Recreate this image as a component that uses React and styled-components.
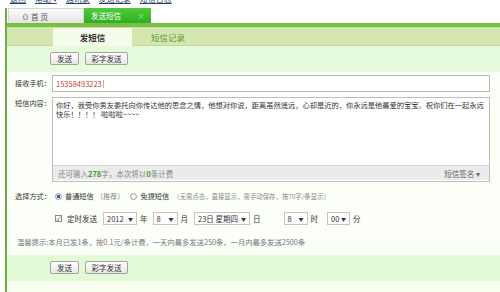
import React from "react";
import styled, { createGlobalStyle } from "styled-components";

const GlobalStyle = createGlobalStyle`
  html, body {
    margin: 0;
    padding: 0;
    background: #fff;
  }
  body {
    width: 500px;
    height: 292px;
    overflow: hidden;
    font-family: "Noto Sans CJK SC", "Noto Sans", sans-serif;
    font-size: 7.5px;
    color: #333;
  }
`;

const TopLinks = styled.div`
  height: 5px;
  overflow: hidden;
  display: flex;
  align-items: flex-end;
  gap: 9px;
  padding-left: 10px;
`;

const TopLink = styled.a`
  font-size: 8px;
  line-height: 12px;
  color: #2d3f6c;
  text-decoration: underline;
  white-space: nowrap;
`;

const Frame = styled.div`
  margin: 3px 0 0 5px;
  border-left: 2px solid #6fae47;
  height: 284px;
  display: flex;
  flex-direction: column;
  background: #f8fff1;
`;

const TabBar = styled.div`
  display: flex;
  height: 15px;
  background: #fff;
`;

const HomeTab = styled.div`
  width: 76px;
  margin-left: 1px;
  box-sizing: border-box;
  background: linear-gradient(#fbfbfb, #e3e3e3);
  border: 1px solid #d6d6d6;
  border-bottom: none;
  display: flex;
  align-items: center;
  gap: 2px;
  padding-left: 13px;
  color: #555;
  letter-spacing: 2px;
`;

const PageTab = styled.div`
  width: 67px;
  box-sizing: border-box;
  background: linear-gradient(#4fcb3a, #2dae21);
  color: #fff;
  display: flex;
  align-items: center;
  justify-content: space-between;
  padding: 0 6px 0 7px;
`;

const Close = styled.span`
  color: #a9e596;
  font-size: 8px;
`;

const GreenRule = styled.div`
  height: 4px;
  background: #7abf45;
`;

const SubTabs = styled.div`
  display: flex;
  height: 17px;
  padding-left: 46px;
  background: #d4e7ae;
  border-top: 1px solid #c4e0a2;
  border-bottom: 1px solid #c3d4a5;
`;

const SubTab = styled.div`
  width: ${(p) => p.$w}px;
  display: flex;
  align-items: center;
  justify-content: center;
  font-size: 8.5px;
  background: ${(p) => (p.$active ? "#f5fcec" : "transparent")};
  color: ${(p) => (p.$active ? "#333" : "#5e9a36")};
  font-weight: ${(p) => (p.$active ? "bold" : "normal")};
  margin-bottom: ${(p) => (p.$active ? "-1px" : "0")};
`;

const Toolbar = styled.div`
  height: 26px;
  box-sizing: border-box;
  padding: 6px 0 0 43px;
  display: flex;
  gap: 6px;
  align-items: flex-start;
  background: ${(p) => p.$bg};
`;

const Button = styled.button`
  width: ${(p) => p.$w}px;
  height: 13px;
  padding: 0;
  border: 1px solid #a3a3a3;
  border-radius: 2px;
  background: linear-gradient(#ffffff, #e6e6e6);
  font-family: inherit;
  font-size: 7.5px;
  line-height: 11px;
  color: #333;
`;

const Form = styled.div`
  padding: 3px 10px 8px 8px;
  background: #fbfff7;
`;

const FieldRow = styled.div`
  display: grid;
  grid-template-columns: 37px 1fr;
  align-items: start;
  margin-top: ${(p) => p.$top || 0}px;
`;

const Label = styled.div`
  font-size: 7.2px;
  line-height: ${(p) => p.$lh}px;
  color: #333;
  white-space: nowrap;
`;

const PhoneInput = styled.div`
  height: 17px;
  box-sizing: border-box;
  border: 1px solid #b9b9b9;
  background: #fff;
  display: flex;
  align-items: center;
  padding-left: 3px;
  color: #c2403a;
`;

const Caret = styled.span`
  width: 1px;
  height: 8px;
  margin-left: 1px;
  background: #d9a0a0;
`;

const MessageBox = styled.div`
  height: 85px;
  box-sizing: border-box;
  border: 1px solid #bdbdbd;
  background: #fff;
  display: flex;
  flex-direction: column;
`;

const MessageText = styled.div`
  flex: 1;
  padding: 3px 2px 0 3px;
  font-size: 7.25px;
  line-height: 8.5px;
  color: #333;
`;

const CounterBar = styled.div`
  height: 14px;
  margin-bottom: 1px;
  background: #ebebeb;
  border-top: 1px solid #d6d6d6;
  display: flex;
  align-items: center;
  justify-content: space-between;
  padding: 0 9px 0 5px;
  color: #888;
`;

const Count = styled.b`
  color: #3d9b2d;
`;

const Signature = styled.span`
  color: #666;
`;

const ModeRow = styled.div`
  display: flex;
  align-items: center;
  height: 10px;
  margin-top: 9px;
`;

const Radio = styled.span`
  width: 7px;
  height: 7px;
  box-sizing: border-box;
  border-radius: 50%;
  border: 1px solid #9a9a9a;
  margin: 0 3px 0 ${(p) => p.$left}px;
  background: ${(p) =>
    p.$checked
      ? "radial-gradient(circle, #2f5fb0 0 1.6px, #e9eef7 2px)"
      : "#f4f4f4"};
`;

const Option = styled.span`
  color: #333;
  font-size: 7.2px;
`;

const Hint = styled.span`
  color: #888;
  font-size: ${(p) => p.$size || 7.2}px;
  margin-left: ${(p) => p.$left || 0}px;
  white-space: nowrap;
`;

const TimingRow = styled.div`
  display: flex;
  align-items: center;
  height: 13px;
  margin-top: 11px;
  padding-left: 40px;
`;

const Checkbox = styled.span`
  width: 7px;
  height: 7px;
  box-sizing: border-box;
  border: 1px solid #8a8a8a;
  background: #fff;
  display: flex;
  align-items: center;
  justify-content: center;
  font-size: 6px;
  line-height: 1;
  color: #333;
  margin-right: 5px;
`;

const Picker = styled.span`
  width: ${(p) => p.$w}px;
  height: 13px;
  box-sizing: border-box;
  border: 1px solid #c4c4c4;
  background: #fff;
  display: flex;
  align-items: center;
  justify-content: space-between;
  padding: 0 3px;
  margin-left: ${(p) => p.$left}px;
  white-space: nowrap;
`;

const Arrow = styled.span`
  font-size: 5px;
  color: #333;
`;

const Unit = styled.span`
  margin-left: 3px;
`;

const Tip = styled.div`
  margin-top: 13px;
  padding-left: 2px;
  height: 9px;
  line-height: 9px;
  font-size: 7.3px;
  color: #777;
  white-space: nowrap;
`;

const HomeIcon = () => (
  <svg width="7" height="7" viewBox="0 0 10 10">
    <path d="M1 5 L5 1.5 L9 5 M2.5 4 V9 H7.5 V4" fill="none" stroke="#888" strokeWidth="1.2" />
  </svg>
);

const message =
  "你好，我受你男友委托向你传达他的思念之情，他想对你说，距离虽然遥远，心却是近的，你永远是他最爱的宝宝。祝你们在一起永远快乐！！！！ 啦啦啦~~~~";

export default function App() {
  return (
    <>
      <GlobalStyle />
      <TopLinks>
        <TopLink>返回</TopLink>
        <TopLink>帮助 ▾</TopLink>
        <TopLink>通讯录</TopLink>
        <TopLink>发送记录</TopLink>
        <TopLink>短信日志</TopLink>
      </TopLinks>
      <Frame>
        <TabBar>
          <HomeTab>
            <HomeIcon />
            <span>首页</span>
          </HomeTab>
          <PageTab>
            <span>发送短信</span>
            <Close>×</Close>
          </PageTab>
        </TabBar>
        <GreenRule />
        <SubTabs>
          <SubTab $w={79} $active>发短信</SubTab>
          <SubTab $w={72}>短信记录</SubTab>
        </SubTabs>
        <Toolbar $bg="#e6fadc">
          <Button $w={29}>发送</Button>
          <Button $w={43}>彩字发送</Button>
        </Toolbar>
        <Form>
          <FieldRow>
            <Label $lh={17}>接收手机：</Label>
            <PhoneInput>
              15358493223
              <Caret />
            </PhoneInput>
          </FieldRow>
          <FieldRow $top={5}>
            <Label $lh={13}>短信内容：</Label>
            <MessageBox>
              <MessageText>{message}</MessageText>
              <CounterBar>
                <span>
                  还可输入<Count>278</Count>字，本次将以<Count>0</Count>条计费
                </span>
                <Signature>短信签名 ▾</Signature>
              </CounterBar>
            </MessageBox>
          </FieldRow>
          <ModeRow>
            <Label $lh={10}>选择方式：</Label>
            <Radio $left={4} $checked />
            <Option>普通短信</Option>
            <Hint $left={2}>（推荐）</Hint>
            <Radio $left={6} />
            <Option>免提短信</Option>
            <Hint $size={6.4} $left={4}>（无需点击，直接显示，需手动保存，按70字/条显示）</Hint>
          </ModeRow>
          <TimingRow>
            <Checkbox>✓</Checkbox>
            <span>定时发送</span>
            <Picker $w={34} $left={6}>
              2012 <Arrow>▼</Arrow>
            </Picker>
            <Unit>年</Unit>
            <Picker $w={25} $left={5}>
              8 <Arrow>▼</Arrow>
            </Picker>
            <Unit>月</Unit>
            <Picker $w={56} $left={6}>
              23日 星期四 <Arrow>▼</Arrow>
            </Picker>
            <Unit>日</Unit>
            <Picker $w={24} $left={23}>
              8 <Arrow>▼</Arrow>
            </Picker>
            <Unit>时</Unit>
            <Picker $w={23} $left={9}>
              00 <Arrow>▼</Arrow>
            </Picker>
            <Unit>分</Unit>
          </TimingRow>
          <Tip>温馨提示:本月已发1条，按0.1元/条计费，一天内最多发送250条，一月内最多发送2500条</Tip>
        </Form>
        <Toolbar $bg="#e2fbd6">
          <Button $w={29}>发送</Button>
          <Button $w={43}>彩字发送</Button>
        </Toolbar>
      </Frame>
    </>
  );
}
